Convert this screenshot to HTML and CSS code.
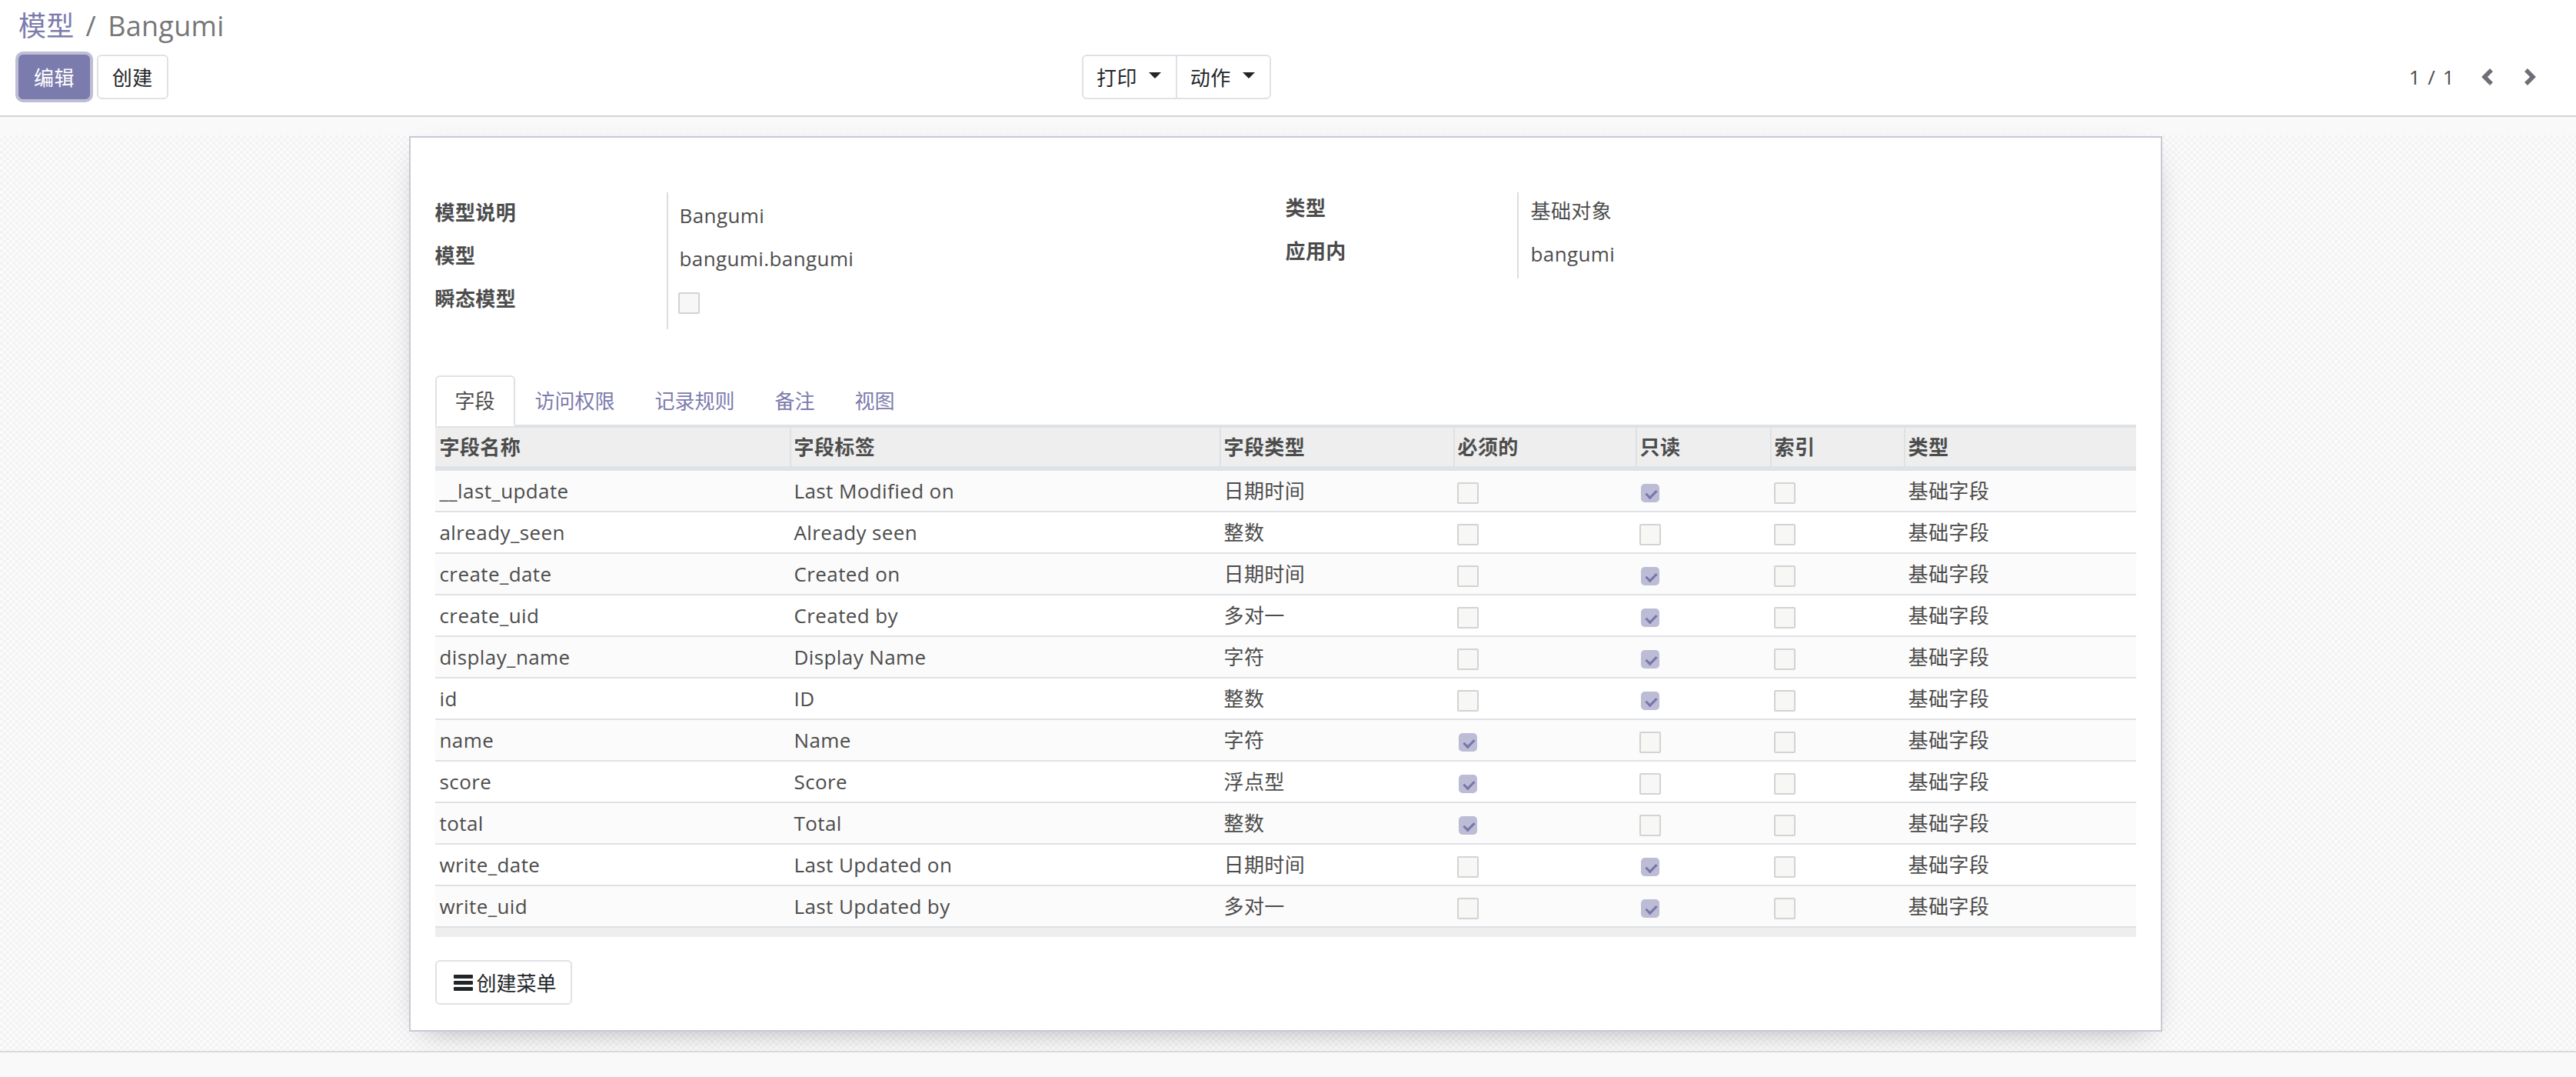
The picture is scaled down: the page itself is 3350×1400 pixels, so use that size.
FILE: index.html
```html
<!DOCTYPE html>
<html lang="zh">
<head>
<meta charset="utf-8">
<title>模型 / Bangumi</title>
<link rel="stylesheet" href="styles.css">
</head>
<body>
<div class="cp">
  <div class="breadcrumb"><span class="crumb">模型</span><span class="crumb-sep">/</span><span class="crumb-cur">Bangumi</span></div>
  <div class="cp-row">
    <div class="cp-buttons">
      <button class="btn btn-primary">编辑</button>
      <button class="btn">创建</button>
    </div>
    <div class="btn-group">
      <button class="btn grp">打印<span class="caret"></span></button>
      <button class="btn grp">动作<span class="caret"></span></button>
    </div>
    <div class="pager">
      <span class="pager-value">1 / 1</span>
      <button class="pager-btn"><svg width="16" height="24" viewBox="0 0 16 24"><polyline points="13,3 4,12 13,21" fill="none" stroke="#6e6e76" stroke-width="5.5"/></svg></button>
      <button class="pager-btn"><svg width="16" height="24" viewBox="0 0 16 24"><polyline points="3,3 12,12 3,21" fill="none" stroke="#6e6e76" stroke-width="5.5"/></svg></button>
    </div>
  </div>
</div>
<div class="cp-gap"></div>
<div class="sheet-bg">
  <div class="sheet">
    <div class="groups">
      <table class="group group-left">
        <tr><td class="lbl">模型说明</td><td class="val">Bangumi</td></tr>
        <tr><td class="lbl">模型</td><td class="val">bangumi.bangumi</td></tr>
        <tr class="row-cb"><td class="lbl">瞬态模型</td><td class="val"><span class="cb cb-block"></span></td></tr>
      </table>
      <table class="group group-right">
        <tr><td class="lbl">类型</td><td class="val">基础对象</td></tr>
        <tr><td class="lbl">应用内</td><td class="val">bangumi</td></tr>
      </table>
    </div>
    <div class="notebook">
      <ul class="tabs">
        <li class="tab active">字段</li>
        <li class="tab">访问权限</li>
        <li class="tab">记录规则</li>
        <li class="tab">备注</li>
        <li class="tab">视图</li>
      </ul>
      <table class="list">
        <colgroup><col class="c1"><col class="c2"><col class="c3"><col class="c4"><col class="c5"><col class="c6"><col class="c7"></colgroup>
        <thead>
          <tr><th>字段名称</th><th>字段标签</th><th>字段类型</th><th>必须的</th><th>只读</th><th>索引</th><th>类型</th></tr>
        </thead>
        <tbody>
          <tr><td>__last_update</td><td>Last Modified on</td><td>日期时间</td><td><span class="cb"></span></td><td><span class="cb on"></span></td><td><span class="cb"></span></td><td>基础字段</td></tr>
          <tr><td>already_seen</td><td>Already seen</td><td>整数</td><td><span class="cb"></span></td><td><span class="cb"></span></td><td><span class="cb"></span></td><td>基础字段</td></tr>
          <tr><td>create_date</td><td>Created on</td><td>日期时间</td><td><span class="cb"></span></td><td><span class="cb on"></span></td><td><span class="cb"></span></td><td>基础字段</td></tr>
          <tr><td>create_uid</td><td>Created by</td><td>多对一</td><td><span class="cb"></span></td><td><span class="cb on"></span></td><td><span class="cb"></span></td><td>基础字段</td></tr>
          <tr><td>display_name</td><td>Display Name</td><td>字符</td><td><span class="cb"></span></td><td><span class="cb on"></span></td><td><span class="cb"></span></td><td>基础字段</td></tr>
          <tr><td>id</td><td>ID</td><td>整数</td><td><span class="cb"></span></td><td><span class="cb on"></span></td><td><span class="cb"></span></td><td>基础字段</td></tr>
          <tr><td>name</td><td>Name</td><td>字符</td><td><span class="cb on"></span></td><td><span class="cb"></span></td><td><span class="cb"></span></td><td>基础字段</td></tr>
          <tr><td>score</td><td>Score</td><td>浮点型</td><td><span class="cb on"></span></td><td><span class="cb"></span></td><td><span class="cb"></span></td><td>基础字段</td></tr>
          <tr><td>total</td><td>Total</td><td>整数</td><td><span class="cb on"></span></td><td><span class="cb"></span></td><td><span class="cb"></span></td><td>基础字段</td></tr>
          <tr><td>write_date</td><td>Last Updated on</td><td>日期时间</td><td><span class="cb"></span></td><td><span class="cb on"></span></td><td><span class="cb"></span></td><td>基础字段</td></tr>
          <tr><td>write_uid</td><td>Last Updated by</td><td>多对一</td><td><span class="cb"></span></td><td><span class="cb on"></span></td><td><span class="cb"></span></td><td>基础字段</td></tr>
        </tbody>
        <tfoot>
          <tr><td></td><td></td><td></td><td></td><td></td><td></td><td></td></tr>
        </tfoot>
      </table>
    </div>
    <button class="btn menu-btn"><svg class="bars" width="25" height="21" viewBox="0 0 25 21"><rect x="0" y="0" width="25" height="5" rx="1"/><rect x="0" y="8" width="25" height="5" rx="1"/><rect x="0" y="16" width="25" height="5" rx="1"/></svg>创建菜单</button>
  </div>
</div>
<div class="chatter"></div>
</body>
</html>
```

FILE: styles.css
```css
* { box-sizing: border-box; }
html, body { margin: 0; padding: 0; }
body {
  font-family: "Open Sans", "Noto Sans CJK SC", sans-serif;
  font-size: 26px;
  letter-spacing: 0.4px;
  color: #4c4c4c;
  background: #fff;
  height: 1400px;
  overflow: hidden;
  display: flex;
  flex-direction: column;
}

/* control panel */
.cp {
  flex: none;
  padding: 12px 33px 21px 24px;
  border-bottom: 2px solid #d4d4d4;
  background: #fff;
}
.breadcrumb { font-size: 36px; line-height: 44px; white-space: nowrap; letter-spacing: 0.3px; }
.crumb { color: #7c7bad; }
.crumb-sep { color: #777; padding: 0 15px; }
.crumb-cur { color: #777; }
.cp-row {
  margin-top: 15px;
  display: grid;
  grid-template-columns: 1383px auto 1fr;
  align-items: center;
}
.cp-buttons { display: flex; gap: 9px; }
.btn {
  font-family: inherit;
  font-size: 26px;
  letter-spacing: inherit;
  height: 58px;
  padding: 0 18px;
  border: 2px solid #dee2e6;
  border-radius: 6px;
  background: #fff;
  color: #212529;
  display: inline-flex;
  align-items: center;
  white-space: nowrap;
  margin: 0;
}
.btn-primary {
  background: #7c7bad;
  border-color: #7c7bad;
  color: #fff;
  box-shadow: 0 0 0 4px rgba(124, 123, 173, 0.5);
}
.btn-group { display: flex; }
.btn-group .grp { padding: 0 19px 0 17px; border-radius: 0; }
.btn-group .grp:first-child { border-radius: 6px 0 0 6px; }
.btn-group .grp + .grp { margin-left: -2px; border-radius: 0 6px 6px 0; }
.caret {
  display: inline-block;
  width: 0; height: 0;
  margin-left: 15px;
  margin-top: -4px;
  border-top: 8px solid #212529;
  border-left: 8px solid transparent;
  border-right: 8px solid transparent;
}
.pager { justify-self: end; display: flex; align-items: center; }
.pager-value { color: #4c4c4c; margin-right: 14px; white-space: nowrap; letter-spacing: 1.5px; }
.pager-btn {
  width: 55px; height: 58px;
  border: 0; background: transparent; padding: 0; margin: 0;
  display: flex; align-items: center; justify-content: center;
}

/* background */
.cp-gap { flex: none; height: 24px; background: #f9f9f9; }
.sheet-bg {
  flex: none;
  padding: 1px 7px 25px 0;
  background: repeating-conic-gradient(#f3f3f3 0 25%, #fbfbfb 0 50%) 0 0 / 8px 8px;
}
.sheet {
  width: 2280px;
  margin: 0 auto;
  background: #fff;
  border: 2px solid #c9c8d5;
  box-shadow: 0 12px 40px -20px rgba(0, 0, 0, 0.4);
  padding: 71px 32px 33px;
}
.chatter { flex: 1; border-top: 2px solid #dadada; background: #f9f9f9; }

/* groups */
.groups { display: flex; }
.group { width: 50%; border-collapse: separate; border-spacing: 0; align-self: flex-start; }
.group td { vertical-align: top; line-height: 34px; height: 56px; padding: 0; }
.group .lbl {
  width: 303px;
  border-right: 2px solid #ddd;
  font-weight: 700;
  color: #4c4c4c;
  white-space: nowrap;
}
.group .val { color: #4c4c4c; }
.group-left .lbl { padding-top: 9px; }
.group-left .val { padding-top: 13px; padding-left: 15px; }
.group-left .row-cb td { height: 66px; }
.group-left .row-cb .val { padding-left: 13px; }
.group-right .lbl { padding-top: 3px; }
.group-right .val { padding-top: 7px; padding-left: 16px; }

/* checkboxes */
.cb {
  display: inline-block;
  position: relative;
  width: 28px; height: 28px;
  border: 2px solid #d3d3d3;
  background: #f7f7f6;
  border-radius: 2px;
  vertical-align: middle;
}
.cb-block { display: block; margin-top: 5px; }
.cb.on {
  border-color: transparent;
  background: #bdbcd6;
  background-clip: padding-box;
  border-radius: 7px;
}
.cb.on::after {
  content: "";
  position: absolute;
  left: 9px; top: 5px;
  width: 6px; height: 11px;
  border: solid #7876a9;
  border-width: 0 3px 3px 0;
  transform: rotate(45deg);
}

/* notebook */
.notebook { margin-top: 60px; }
.tabs {
  list-style: none;
  margin: 0; padding: 0;
  display: flex;
  border-bottom: 2px solid #dee2e6;
}
.tab {
  padding: 0 24px;
  line-height: 62px;
  border: 2px solid transparent;
  border-radius: 6px 6px 0 0;
  margin-bottom: -2px;
  color: #7c7bad;
  white-space: nowrap;
  letter-spacing: 0;
}
.tab.active { color: #4c4c4c; border-color: #dee2e6 #dee2e6 #fff; background: #fff; }

/* list */
.list {
  width: 100%;
  table-layout: fixed;
  border-collapse: separate;
  border-spacing: 0;
}
.c1 { width: 461px; } .c2 { width: 559px; } .c3 { width: 304px; }
.c4 { width: 237px; } .c5 { width: 175px; } .c6 { width: 174px; }
.list th {
  text-align: left;
  font-weight: 700;
  color: #4c4c4c;
  background: #eee;
  padding: 0 6px;
  line-height: 50px;
  border-top: 2px solid #dee2e6;
  border-bottom: 4px solid #dee2e6;
  white-space: nowrap;
}
.list th + th { box-shadow: inset 2px 0 0 #dfe1e4; }
.list td {
  padding: 0 6px;
  line-height: 52px;
  border-top: 2px solid #dee2e6;
  white-space: nowrap;
  overflow: hidden;
}
.list td .cb { margin-left: -1px; }
.list tbody tr:nth-child(odd) td { background: #fbfbfb; }
.list tfoot td { height: 14px; line-height: 0; font-size: 0; padding: 0; background: #eee; }

.menu-btn { margin-top: 30px; padding: 0 18px 0 22px; gap: 5px; letter-spacing: 0; }
.bars { fill: #212529; display: block; }
```
